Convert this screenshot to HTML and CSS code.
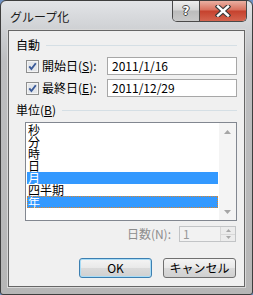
FILE: index.html
```html
<!DOCTYPE html>
<html lang="ja">
<head>
<meta charset="utf-8">
<title>グループ化</title>
<link rel="stylesheet" href="styles.css">
</head>
<body>
<div class="window">
  <div class="titlebar">
    <span class="title">グループ化</span>
    <div class="caption">
      <div class="cap-help"><span>?</span></div>
      <div class="cap-close">
        <svg width="16" height="12" viewBox="0 0 16 12">
          <path d="M3 1.5 L13 10.5 M13 1.5 L3 10.5" stroke="#3a3a3a" stroke-width="4.6" stroke-linecap="square"/>
          <path d="M3 1.5 L13 10.5 M13 1.5 L3 10.5" stroke="#ffffff" stroke-width="2.4" stroke-linecap="square"/>
        </svg>
      </div>
    </div>
  </div>
  <div class="client">
    <div class="group-head"><span>自動</span><i class="rule"></i></div>
    <div class="rows">
      <div class="row">
        <span class="check"><svg width="13" height="13" viewBox="0 0 13 13"><rect x="0.5" y="0.5" width="12" height="12" fill="#f4f4f4" stroke="#8e8f8f"/><rect x="2" y="2" width="9" height="9" fill="#e3e6ea"/><path d="M3.3 6.4 L5.4 9 L9.8 3.2" fill="none" stroke="#3a5a98" stroke-width="1.9"/></svg></span>
        <span class="label">開始日(<u>S</u>):</span>
        <span class="textbox">2011/1/16</span>
      </div>
      <div class="row">
        <span class="check"><svg width="13" height="13" viewBox="0 0 13 13"><rect x="0.5" y="0.5" width="12" height="12" fill="#f4f4f4" stroke="#8e8f8f"/><rect x="2" y="2" width="9" height="9" fill="#e3e6ea"/><path d="M3.3 6.4 L5.4 9 L9.8 3.2" fill="none" stroke="#3a5a98" stroke-width="1.9"/></svg></span>
        <span class="label">最終日(<u>E</u>):</span>
        <span class="textbox">2011/12/29</span>
      </div>
    </div>
    <div class="group-head head2"><span>単位(<u>B</u>)</span><i class="rule"></i></div>
    <div class="listbox">
      <div class="items">
        <div class="item">秒</div>
        <div class="item">分</div>
        <div class="item">時</div>
        <div class="item">日</div>
        <div class="item sel">月</div>
        <div class="item">四半期</div>
        <div class="item sel focus">年</div>
      </div>
      <div class="vscroll">
        <div class="sbtn"><svg width="7" height="4" viewBox="0 0 7 4"><path d="M0 4 L3.5 0 L7 4 Z" fill="#a6a6a6"/></svg></div>
        <div class="track"></div>
        <div class="sbtn"><svg width="7" height="4" viewBox="0 0 7 4"><path d="M0 0 L3.5 4 L7 0 Z" fill="#a6a6a6"/></svg></div>
      </div>
    </div>
    <div class="days">
      <span class="days-label">日数(N):</span>
      <div class="spin">
        <span class="spin-val">1</span>
        <div class="spin-btns">
          <div class="spin-b"><svg width="5" height="3" viewBox="0 0 5 3"><path d="M0 3 L2.5 0 L5 3 Z" fill="#a8a8a8"/></svg></div>
          <div class="spin-b"><svg width="5" height="3" viewBox="0 0 5 3"><path d="M0 0 L2.5 3 L5 0 Z" fill="#a8a8a8"/></svg></div>
        </div>
      </div>
    </div>
    <div class="buttons">
      <div class="btn default">OK</div>
      <div class="btn">キャンセル</div>
    </div>
  </div>
</div>
</body>
</html>
```

FILE: styles.css
```css
* { box-sizing: border-box; }
html, body { margin: 0; padding: 0; }
body {
  width: 253px;
  height: 295px;
  overflow: hidden;
  background: #6f92c4;
  font-family: "Noto Sans CJK JP", sans-serif;
  font-size: 12px;
  color: #000;
}
u { text-decoration: underline; text-underline-offset: 1px; }

.window {
  width: 253px;
  height: 295px;
  border: 1px solid #3e3e3e;
  border-radius: 6px 6px 3px 3px;
  background: linear-gradient(180deg, #e2e4e7 0px, #cfd1d4 28px, #bdbec0 60px, #b6b6b6 100%);
  padding: 0 7px 7px 7px;
  display: flex;
  flex-direction: column;
}

.titlebar {
  height: 29px;
  display: flex;
  align-items: flex-start;
  flex-shrink: 0;
}
.title {
  margin-top: 9px;
  margin-left: 2px;
  line-height: 14px;
  font-size: 12px;
  color: #1c1c1c;
}
.caption {
  margin-left: auto;
  margin-right: -2px;
  margin-top: 0;
  display: flex;
  height: 21px;
  border: 1px solid #4a4a4a;
  border-top: none;
  border-radius: 0 0 5px 5px;
  overflow: hidden;
}
.cap-help {
  width: 27px;
  height: 20px;
  background: linear-gradient(180deg, #eeeeee 0%, #d6d6d6 45%, #bcbcbc 50%, #c9c9c9 100%);
  border-right: 1px solid #4a4a4a;
  display: flex;
  align-items: center;
  justify-content: center;
}
.cap-help span {
  font-family: "DejaVu Sans", sans-serif;
  font-weight: bold;
  font-size: 12px;
  line-height: 12px;
  color: #ffffff;
  text-shadow: -1px 0 #444, 1px 0 #444, 0 -1px #444, 0 1px #444;
}
.cap-close {
  width: 46px;
  height: 20px;
  background: linear-gradient(180deg, #eab0a2 0%, #d9705d 45%, #c5412d 50%, #d4644f 100%);
  display: flex;
  align-items: center;
  justify-content: center;
}

.client {
  flex: 1;
  border: 1px solid #666;
  box-shadow: 0 0 0 1px #d8d8d8;
  background: #f0f0f0;
  padding: 7px 7px 7px 7px;
  display: flex;
  flex-direction: column;
}

.group-head {
  height: 14px;
  display: flex;
  align-items: center;
  gap: 6px;
  line-height: 14px;
}
.rule {
  flex: 1;
  height: 1px;
  background: #d5dfe5;
}
.head2 { margin-top: 6px; }

.rows {
  margin-top: 5px;
  padding-left: 10px;
  display: flex;
  flex-direction: column;
  gap: 4px;
}
.row {
  height: 18px;
  display: flex;
  align-items: center;
}
.check { width: 13px; height: 13px; display: block; }
.check svg { display: block; }
.label { margin-left: 3px; line-height: 14px; }
.textbox {
  margin-left: auto;
  width: 130px;
  height: 18px;
  border: 1px solid #a7a7a7;
  background: #fff;
  padding-left: 4px;
  line-height: 16px;
  font-size: 12px;
}

.listbox {
  margin-top: 5px;
  margin-left: 9px;
  width: 212px;
  height: 99px;
  border: 1px solid #828790;
  background: #fff;
  display: flex;
}
.items {
  flex: 1;
  padding: 1px;
}
.item {
  height: 12px;
  line-height: 12px;
  padding-left: 1px;
}
.item.sel { background: #3399ff; color: #fff; }
.item.focus { outline: 1px dotted #d9862e; outline-offset: -1px; }
.vscroll {
  width: 17px;
  display: flex;
  flex-direction: column;
  background: #f4f4f4;
}
.sbtn {
  height: 17px;
  display: flex;
  align-items: center;
  justify-content: center;
}
.track { flex: 1; }

.days {
  margin-top: 5px;
  height: 16px;
  display: flex;
  justify-content: flex-end;
  align-items: center;
  padding-right: 1px;
}
.days-label { color: #8d8d8d; margin-right: 8px; line-height: 14px; }
.spin {
  width: 57px;
  height: 16px;
  border: 1px solid #c2c4c6;
  background: #f2f2f2;
  display: flex;
}
.spin-val { flex: 1; color: #9a9a9a; padding-left: 3px; line-height: 14px; }
.spin-btns {
  width: 15px;
  display: flex;
  flex-direction: column;
  border-left: 1px solid #d8d8d8;
}
.spin-b {
  flex: 1;
  display: flex;
  align-items: center;
  justify-content: center;
  background: #ececec;
}
.spin-b + .spin-b { border-top: 1px solid #d8d8d8; }

.buttons {
  margin-top: 16px;
  display: flex;
  justify-content: flex-end;
  gap: 11px;
  padding-right: 1px;
}
.btn {
  width: 73px;
  height: 20px;
  border: 1px solid #707070;
  border-radius: 3px;
  background: linear-gradient(180deg, #f4f4f4 0%, #e9e9e9 48%, #dadada 52%, #d0d0d0 100%);
  display: flex;
  align-items: center;
  justify-content: center;
  line-height: 14px;
}
.btn.default {
  border-color: #3c7fb1;
  box-shadow: inset 0 0 0 1px #a8dcf6;
}
```
